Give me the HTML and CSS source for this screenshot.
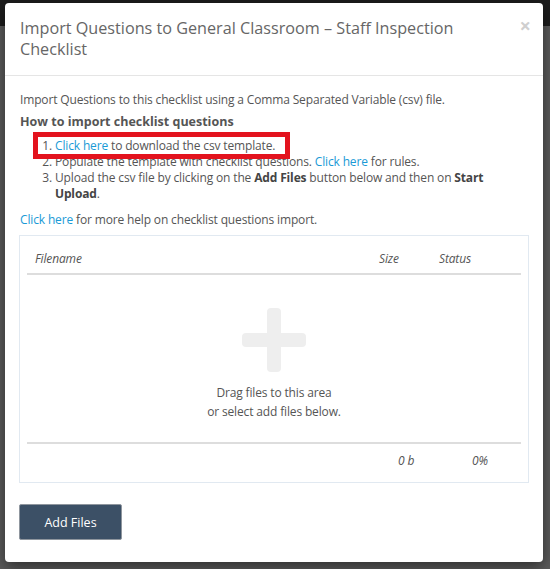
FILE: index.html
```html
<!DOCTYPE html>
<html lang="en">
<head>
<meta charset="utf-8">
<title>Import Questions</title>
<link rel="stylesheet" href="styles.css">
</head>
<body>
<div class="page">
  <div class="topbar"></div>
  <div class="page-rest"></div>
</div>
<div class="modal">
  <div class="modal-header">
    <h4 class="modal-title">Import Questions to General Classroom – Staff Inspection Checklist</h4>
    <span class="close">×</span>
  </div>
  <div class="modal-body">
    <p class="intro">Import Questions to this checklist using a Comma Separated Variable (csv) file.</p>
    <h5 class="howto">How to import checklist questions</h5>
    <ol class="steps">
      <li class="highlighted"><a class="link" href="#">Click here</a> to download the csv template.</li>
      <li>Populate the template with checklist questions. <a class="link" href="#">Click here</a> for rules.</li>
      <li>Upload the csv file by clicking on the <b>Add Files</b> button below and then on <b>Start Upload</b>.</li>
    </ol>
    <p class="more"><a class="link" href="#">Click here</a> for more help on checklist questions import.</p>
    <div class="uploader">
      <div class="ul-row ul-head">
        <span class="c-name">Filename</span>
        <span class="c-size">Size</span>
        <span class="c-status">Status</span>
      </div>
      <div class="dropzone">
        <svg class="plus" width="64" height="64" viewBox="0 0 64 64" aria-hidden="true">
          <rect x="25" y="0" width="14" height="64" rx="4" fill="#eeeeee"/>
          <rect x="0" y="25" width="64" height="14" rx="4" fill="#eeeeee"/>
        </svg>
        <div class="drop-text">Drag files to this area<br>or select add files below.</div>
      </div>
      <div class="ul-row ul-foot">
        <span class="c-name"></span>
        <span class="c-size">0 b</span>
        <span class="c-status">0%</span>
      </div>
    </div>
    <button class="add-btn" type="button">Add Files</button>
  </div>
</div>
</body>
</html>
```
FILE: styles.css
```css
html, body {
  margin: 0;
  padding: 0;
}
body {
  width: 550px;
  height: 569px;
  overflow: hidden;
  position: relative;
  background: #5b5b5b;
  font-family: "Open Sans", "Noto Sans", sans-serif;
  font-size: 12px;
  letter-spacing: -0.15px;
  color: #555;
}
.page {
  display: flex;
  flex-direction: column;
  height: 100%;
}
.topbar {
  height: 26px;
  background: #1d1d1d;
}
.page-rest {
  flex: 1;
  background: #5c5c5c;
}
.modal {
  position: absolute;
  left: 5px;
  top: 3px;
  width: 538px;
  height: 559px;
  box-sizing: border-box;
  background: #fff;
  border-radius: 4px;
  box-shadow: 0 5px 15px rgba(0, 0, 0, 0.5);
  display: flex;
  flex-direction: column;
}
.modal-header {
  position: relative;
  padding: 15px 40px 15px 15px;
  border-bottom: 1px solid #e5e5e5;
}
.modal-title {
  margin: 0;
  font-size: 16.2px;
  letter-spacing: 0;
  line-height: 21px;
  font-weight: normal;
  color: #666;
}
.close {
  position: absolute;
  right: 12px;
  top: 13px;
  font-size: 20px;
  line-height: 20px;
  font-weight: bold;
  letter-spacing: 0;
  color: #cfcfcf;
}
.modal-body {
  padding: 15px 15px 23px 15px;
  display: flex;
  flex-direction: column;
  align-items: flex-start;
}
.intro {
  margin: 0;
  line-height: 18px;
}
.howto {
  margin: 4px 0 0 0;
  font-size: 12.5px;
  letter-spacing: 0;
  line-height: 18px;
  font-weight: bold;
  color: #555;
}
.steps {
  margin: 7px 0 0 0;
  padding-left: 35px;
  line-height: 16px;
}
.steps b {
  color: #444;
}
.highlighted {
  position: relative;
}
.highlighted::after {
  content: "";
  position: absolute;
  left: -22px;
  top: -6px;
  width: 257px;
  height: 27px;
  box-sizing: border-box;
  border: 5px solid #e3131e;
  z-index: 1;
}
.link {
  color: #1a9ad6;
  text-decoration: none;
}
.more {
  margin: 10px 0 0 0;
  line-height: 16px;
}
.uploader {
  align-self: stretch;
  margin: 7px -1px 0 -1px;
  border: 1px solid #e1e9f1;
  padding: 0 7px;
}
.ul-row {
  display: grid;
  grid-template-columns: 1fr 60px 90px;
  line-height: 16px;
  font-style: italic;
}
.ul-head {
  padding: 15px 0 6px;
  border-bottom: 2px solid #dddddd;
}
.ul-head .c-name {
  padding-left: 8px;
}
.ul-head .c-size,
.ul-head .c-status {
  padding-left: 8px;
}
.ul-foot {
  padding: 9px 0 13px;
  border-top: 2px solid #dddddd;
}
.ul-foot .c-size {
  padding-left: 27px;
}
.ul-foot .c-status {
  padding-left: 41px;
}
.dropzone {
  height: 167px;
  display: flex;
  flex-direction: column;
  align-items: center;
}
.plus {
  display: block;
  margin-top: 33px;
}
.drop-text {
  margin-top: 11px;
  text-align: center;
  line-height: 19px;
}
.add-btn {
  margin: 21px 0 0 -1px;
  width: 103px;
  height: 36px;
  background: #3c5066;
  border: 1px solid #8f969e;
  border-radius: 2px;
  color: #fff;
  font-family: "Open Sans", "Noto Sans", sans-serif;
  font-size: 12.5px;
  padding: 0;
}
```
